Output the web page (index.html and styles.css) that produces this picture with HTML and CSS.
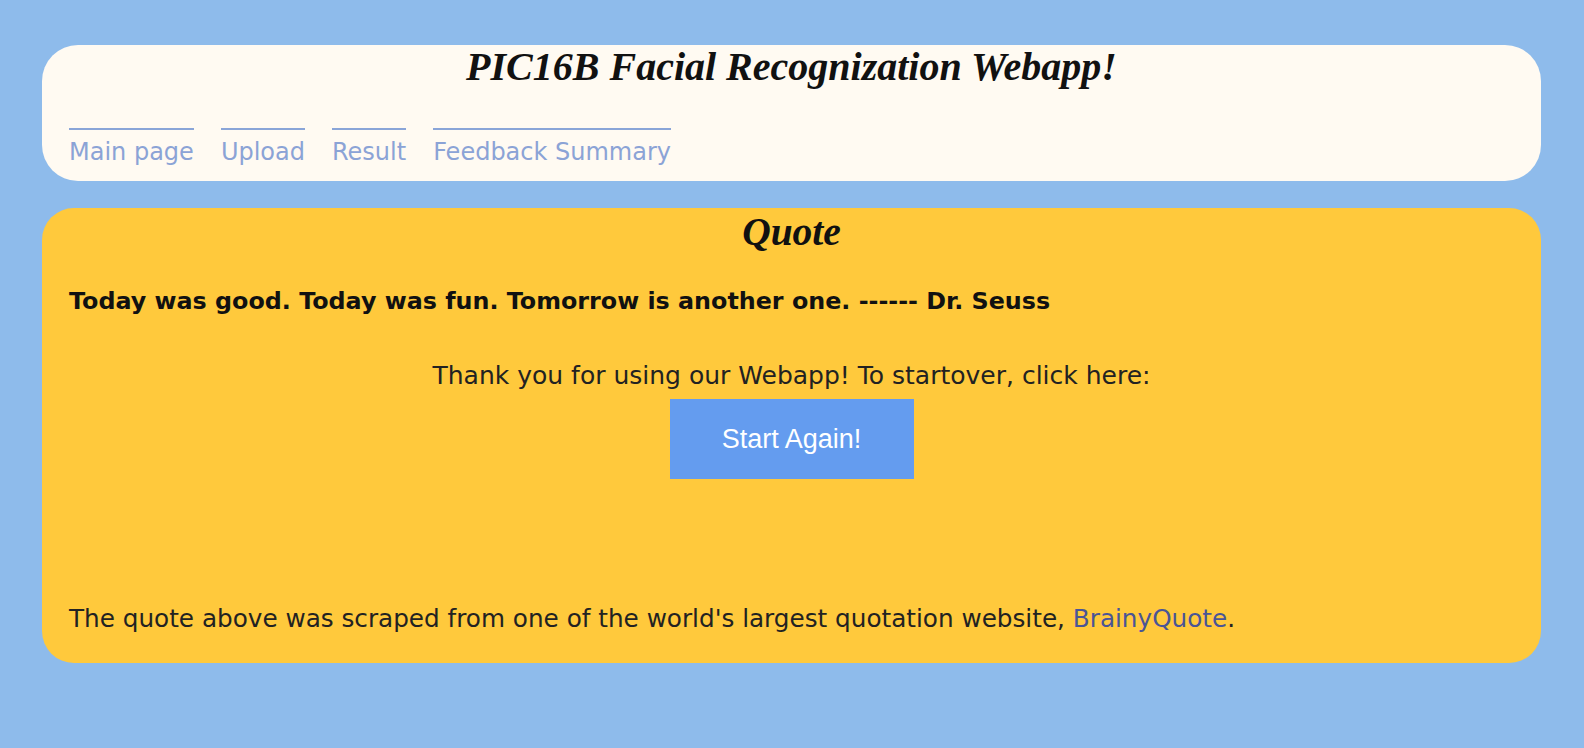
FILE: index.html
```html
<!DOCTYPE html>
<html lang="en">
<head>
<meta charset="utf-8">
<title>PIC16B Facial Recognization Webapp!</title>
<link rel="stylesheet" href="styles.css">
</head>
<body>
<div class="page">
  <header class="header-card">
    <h1 class="site-title">PIC16B Facial Recognization Webapp!</h1>
    <nav class="nav">
      <a class="nav-link" href="#">Main page</a>
      <a class="nav-link" href="#">Upload</a>
      <a class="nav-link" href="#">Result</a>
      <a class="nav-link" href="#">Feedback Summary</a>
    </nav>
  </header>
  <main class="quote-card">
    <h2 class="quote-title">Quote</h2>
    <p class="quote-text">Today was good. Today was fun. Tomorrow is another one. ------ Dr. Seuss</p>
    <div class="restart">
      <p class="restart-text">Thank you for using our Webapp! To startover, click here:</p>
      <button class="restart-btn" type="button">Start Again!</button>
    </div>
    <p class="source">The quote above was scraped from one of the world's largest quotation website, <a class="source-link" href="#">BrainyQuote</a>.</p>
  </main>
</div>
</body>
</html>
```

FILE: styles.css
```css
html, body {
  margin: 0;
  padding: 0;
  background: #8ebbeb;
  height: 100%;
}

.page {
  display: flex;
  flex-direction: column;
  gap: 27px;
  padding: 45px 43px 0 42px;
  font-family: "DejaVu Sans", sans-serif;
}

.header-card {
  background: #fffaf2;
  border-radius: 36px;
  height: 136px;
  box-sizing: border-box;
  padding: 0 27px 0;
}

.site-title {
  margin: 0;
  text-align: center;
  font-family: "Liberation Serif", serif;
  font-style: italic;
  font-weight: bold;
  font-size: 40px;
  line-height: 44px;
  color: #111;
}

.nav {
  display: flex;
  gap: 27px;
  margin-top: 39px;
}

.nav-link {
  border-top: 2px solid #8aa5d8;
  padding-top: 8px;
  font-size: 24px;
  line-height: 28px;
  color: #8ba3d6;
  text-decoration: none;
}

.quote-card {
  background: #ffc93c;
  border-radius: 32px;
  height: 455px;
  box-sizing: border-box;
  padding: 3px 27px 0;
  display: flex;
  flex-direction: column;
}

.quote-title {
  margin: 0;
  text-align: center;
  font-family: "Liberation Serif", serif;
  font-style: italic;
  font-weight: bold;
  font-size: 39.5px;
  line-height: 42px;
  color: #111;
}

.quote-text {
  margin: 34px 0 0;
  font-weight: bold;
  font-size: 23.8px;
  line-height: 28px;
  color: #111;
}

.restart {
  display: flex;
  flex-direction: column;
  align-items: center;
  margin-top: 47px;
}

.restart-text {
  margin: 0;
  font-size: 25px;
  line-height: 28px;
  color: #222;
}

.restart-btn {
  margin-top: 9px;
  width: 244px;
  height: 80px;
  border: none;
  background: #649cef;
  color: #fff;
  font-family: "Liberation Sans", sans-serif;
  font-size: 27px;
  cursor: pointer;
}

.source {
  margin: auto 0 30px;
  font-size: 24.7px;
  line-height: 28px;
  color: #222;
}

.source-link {
  color: #4a5596;
  text-decoration: none;
}
```
